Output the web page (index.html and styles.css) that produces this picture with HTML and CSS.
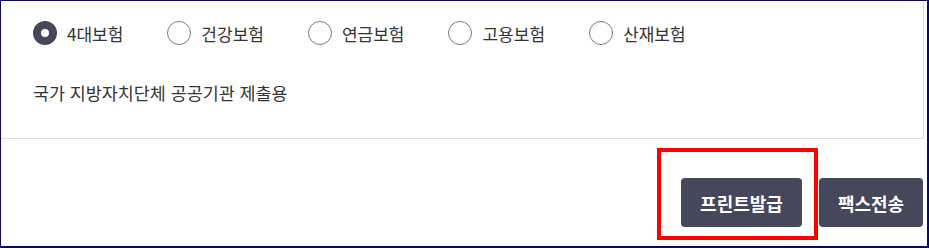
FILE: index.html
```html
<!DOCTYPE html>
<html lang="ko">
  <head>
    <meta charset="UTF-8" />
    <meta name="viewport" content="width=device-width, initial-scale=1.0" />
    <link rel="stylesheet" href="styles.css">
    <title>증명서 발급</title>
  </head>
  <body>
    <div class="frame">
      <section class="panel">
        <div class="radios">
          <label class="radio"><span class="dot checked"></span>4대보험</label>
          <label class="radio"><span class="dot"></span>건강보험</label>
          <label class="radio"><span class="dot"></span>연금보험</label>
          <label class="radio"><span class="dot"></span>고용보험</label>
          <label class="radio"><span class="dot"></span>산재보험</label>
        </div>
        <p class="note">국가 지방자치단체 공공기관 제출용</p>
      </section>
      <div class="actions">
        <button class="btn print">프린트발급</button>
        <button class="btn fax">팩스전송</button>
      </div>
      <div class="mark"></div>
    </div>
  </body>
</html>
```

FILE: styles.css
```css
* {
  box-sizing: border-box;
  margin: 0;
  padding: 0;
  font-family: 'Noto Sans CJK KR', 'Noto Sans', sans-serif;
  --navy: #0c0b5e;
  --slate: #45475a;
  --line: #dedede;
  --text: #333;
}

body {
  background-color: white;
}

.frame {
  position: relative;
  width: 929px;
  height: 248px;
  border: 1px solid var(--navy);
  border-right-width: 2px;
  border-bottom-width: 2px;
}

.panel {
  height: 138px;
  margin-right: 3px;
  padding: 20px 0 0 32px;
  border-right: 1px solid var(--line);
  border-bottom: 1px solid var(--line);
}

.radios {
  display: flex;
  gap: 44px;
}

.radio {
  display: flex;
  align-items: center;
  gap: 10px;
  height: 24px;
  font-size: 17px;
  color: var(--text);
}

.dot {
  width: 24px;
  height: 24px;
  border: 1px solid #7a7a7a;
  border-radius: 50%;
}

.dot.checked {
  border: 8px solid var(--slate);
}

.note {
  margin-top: 36px;
  font-size: 17.4px;
  line-height: 24px;
  color: var(--text);
}

.actions {
  display: flex;
  justify-content: flex-end;
  gap: 17px;
  margin-top: 39px;
  padding-right: 4px;
}

.btn {
  height: 49px;
  border: none;
  border-radius: 4px;
  color: white;
  background-color: var(--slate);
  font-size: 18px;
  font-weight: bold;
}

.print {
  width: 121px;
}

.fax {
  width: 104px;
}

.mark {
  position: absolute;
  left: 656px;
  top: 147px;
  width: 161px;
  height: 92px;
  border: 4px solid #f00;
}
```
